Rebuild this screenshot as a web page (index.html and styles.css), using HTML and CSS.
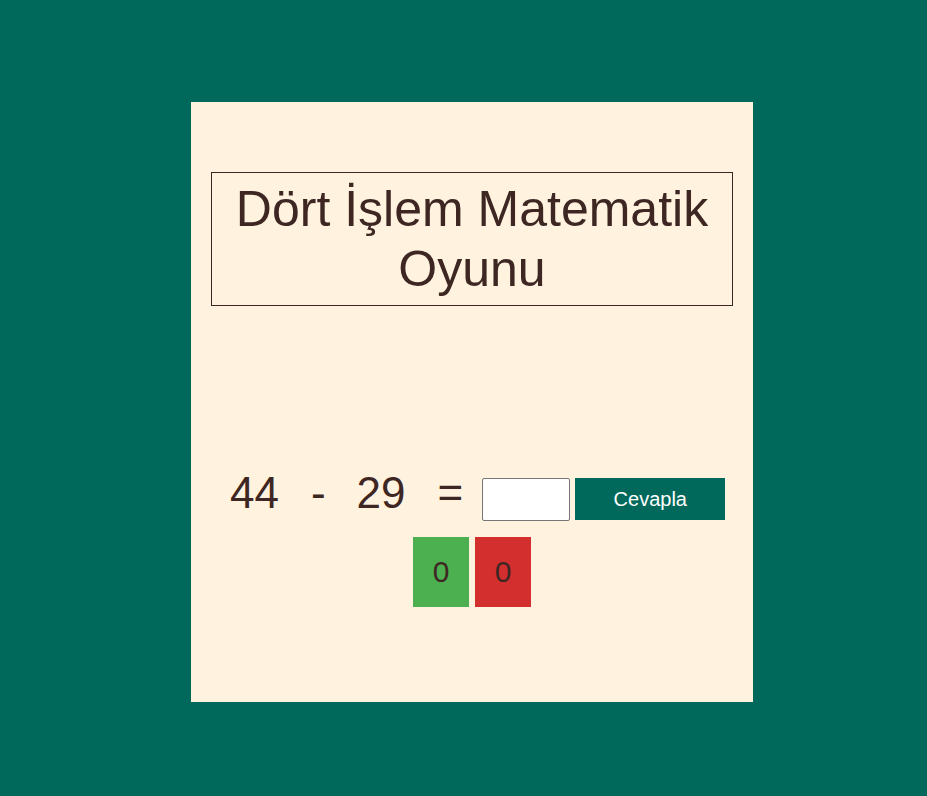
FILE: index.html
```html
<!DOCTYPE html>
<html lang="tr">
<head>
<meta charset="utf-8">
<title>Dört İşlem Matematik Oyunu</title>
<link rel="stylesheet" href="styles.css">
</head>
<body>
  <main class="card">
    <h1 class="title">Dört İşlem Matematik Oyunu</h1>
    <div class="equation">
      <span class="term term-a">44</span>
      <span class="term term-op">-</span>
      <span class="term term-b">29</span>
      <span class="term term-eq">=</span>
      <input class="answer" type="text" aria-label="Cevap">
      <button class="submit" type="button">Cevapla</button>
    </div>
    <div class="scores">
      <div class="score score-correct">0</div>
      <div class="score score-wrong">0</div>
    </div>
  </main>
</body>
</html>
```

FILE: styles.css
```css
html, body {
  margin: 0;
  padding: 0;
}

body {
  background: #00695c;
  min-height: 796px;
  padding: 102px 0 0 191px;
  box-sizing: border-box;
  font-family: "Liberation Sans", Arial, sans-serif;
  color: #3e2723;
}

.card {
  width: 562px;
  height: 600px;
  box-sizing: border-box;
  background: #fff3e0;
  padding: 70px 20px 0;
}

.title {
  margin: 0;
  border: 1px solid #3e2723;
  padding: 6px 0;
  font-size: 50px;
  line-height: 60px;
  font-weight: normal;
  text-align: center;
}

.equation {
  display: flex;
  align-items: flex-start;
  margin-top: 161px;
  padding-left: 19px;
}

.term {
  font-size: 44px;
  line-height: 51px;
}

.term-a { margin-right: 32px; }
.term-op { margin-right: 31px; }
.term-b { margin-right: 32px; }
.term-eq { margin-right: 19px; }

.answer {
  margin: 11px 0 0;
  width: 88px;
  height: 43px;
  box-sizing: border-box;
  border: 1px solid #767676;
  border-radius: 2px;
  padding: 0 4px;
  background: #fff;
  font-family: "Liberation Sans", Arial, sans-serif;
  font-size: 20px;
}

.submit {
  margin: 11px 0 0 5px;
  width: 150px;
  height: 42px;
  border: none;
  padding: 0;
  background: #00695c;
  color: #fff;
  font-family: "Liberation Sans", Arial, sans-serif;
  font-size: 20px;
}

.scores {
  display: flex;
  justify-content: center;
  gap: 6px;
  margin-top: 16px;
}

.score {
  width: 56px;
  height: 70px;
  display: flex;
  align-items: center;
  justify-content: center;
  font-size: 30px;
  color: #3e2723;
}

.score-correct { background: #4caf50; }
.score-wrong { background: #d32f2f; }
```
